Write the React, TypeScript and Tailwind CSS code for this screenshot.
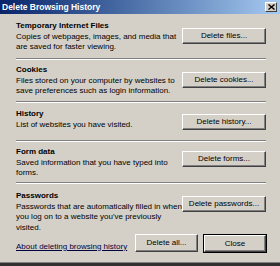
import React from "react";

function Btn({ label, w = "w-[84px]", h = "h-[16px]", def = false }: { label: string; w?: string; h?: string; def?: boolean }) {
  return (
    <div className={`${w} ${h} shrink-0 ${def ? "border border-black" : ""}`}>
      <div className="w-full h-full bg-[#d4d0c8] border border-t-white border-l-white border-b-[#404040] border-r-[#404040] shadow-[inset_-1px_-1px_0_#808080] flex items-center justify-center text-[8px] leading-none text-black whitespace-nowrap">
        {label}
      </div>
    </div>
  );
}

function Sep() {
  return <div className="mr-[14px] h-[2px] border-t border-t-[#808080] border-b border-b-white" />;
}

function Section({
  title,
  lines,
  btn,
  btnTop,
  h,
}: {
  title: string;
  lines: string[];
  btn: string;
  btnTop: string;
  h: string;
}) {
  return (
    <div className={`flex ${h}`}>
      <div className="flex-1 leading-[10.5px] text-[8px] whitespace-nowrap">
        <div className="font-bold">{title}</div>
        {lines.map((l, i) => (
          <div key={i}>{l}</div>
        ))}
      </div>
      <div className={`${btnTop} mr-[14px]`}>
        <Btn label={btn} />
      </div>
    </div>
  );
}

export default function App() {
  return (
    <div className="w-[280px] h-[266px] overflow-hidden bg-[#d4d0c8] font-['Liberation_Sans',Arial,sans-serif] text-black flex flex-col">
      <div className="h-[14px] shrink-0 bg-gradient-to-r from-[#0a246a] to-[#a6caf0] flex items-center justify-between pl-[2px] pr-[3px]">
        <span className="text-white font-bold text-[8.5px] leading-none">Delete Browsing History</span>
        <div className="w-[12px] h-[10px] bg-[#d4d0c8] border border-t-white border-l-white border-b-[#404040] border-r-[#404040] flex items-center justify-center">
          <svg width="7" height="6" viewBox="0 0 7 6">
            <path d="M0.5 0.5 L6.5 5.5 M6.5 0.5 L0.5 5.5" stroke="black" strokeWidth="1.4" />
          </svg>
        </div>
      </div>
      <div className="flex-1 pl-[16px] flex flex-col">
        <div className="h-[7px]" />
        <Section
          title="Temporary Internet Files"
          lines={["Copies of webpages, images, and media that", "are saved for faster viewing."]}
          btn="Delete files..."
          btnTop="mt-[7px]"
          h="h-[37px]"
        />
        <Sep />
        <div className="h-[5px]" />
        <Section
          title="Cookies"
          lines={["Files stored on your computer by websites to", "save preferences such as login information."]}
          btn="Delete cookies..."
          btnTop="mt-[7px]"
          h="h-[36px]"
        />
        <Sep />
        <div className="h-[6px]" />
        <Section
          title="History"
          lines={["List of websites you have visited."]}
          btn="Delete history..."
          btnTop="mt-[5px]"
          h="h-[31px]"
        />
        <Sep />
        <div className="h-[5px]" />
        <Section
          title="Form data"
          lines={["Saved information that you have typed into", "forms."]}
          btn="Delete forms..."
          btnTop="mt-[4px]"
          h="h-[35px]"
        />
        <Sep />
        <div className="h-[7px]" />
        <Section
          title="Passwords"
          lines={["Passwords that are automatically filled in when", "you log on to a website you've previously", "visited."]}
          btn="Delete passwords..."
          btnTop="mt-[5px]"
          h="h-[41px]"
        />
        <div className="flex items-end justify-between mr-[13px] mt-[2px]">
          <span className="underline text-[8px] leading-[10.5px] text-[#000040] mb-[1px] whitespace-nowrap">About deleting browsing history</span>
          <div className="flex gap-[5px]">
            <Btn label="Delete all..." w="w-[63px]" h="h-[18px]" />
            <Btn label="Close" w="w-[64px]" h="h-[19px]" def />
          </div>
        </div>
      </div>
      <div className="h-[4px] shrink-0 bg-[#303030] border-t border-t-[#808080]" />
    </div>
  );
}
